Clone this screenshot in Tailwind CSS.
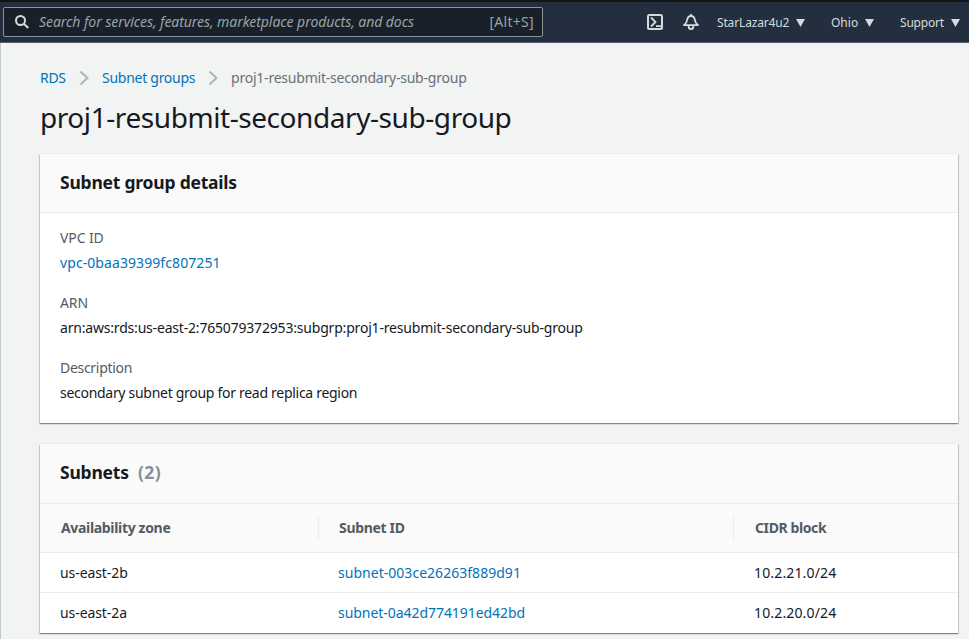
<!DOCTYPE html>
<html lang="en">
<head>
<meta charset="utf-8">
<title>RDS - Subnet groups</title>
<script src="https://cdn.jsdelivr.net/npm/@tailwindcss/browser@4"></script>
</head>
<body class="h-[639px] w-[969px] overflow-hidden bg-[#f2f3f3] font-['Noto_Sans',sans-serif] text-[14px] leading-5 text-[#16191f]">
<header class="flex h-[43px] items-center border-t-2 border-b border-t-[#141414] border-b-[#545b6e] bg-[#232f3e] pl-[3px] text-[#d5dbdb]">
  <div class="flex h-[30px] w-[540px] shrink-0 items-center rounded-[2px] border border-[#879596] bg-[#1a202a] px-[9px]">
    <svg class="ml-[2px] size-[14px] shrink-0" viewBox="0 0 14 14" fill="none" stroke="#d5dbdb" stroke-width="2"><circle cx="5.500" cy="5.500" r="4.500"/><path d="M8.800 8.800l4.500 4.200"/></svg>
    <span class="ml-[10px] whitespace-nowrap tracking-[-0.06px] text-[#95a5a6] italic">Search for services, features, marketplace products, and docs</span>
    <span class="-mr-px ml-auto whitespace-nowrap tracking-[0.3px] text-[#95a5a6]">[Alt+S]</span>
  </div>
  <svg class="ml-[104px] size-4 shrink-0" viewBox="0 0 16 16" fill="none" stroke="#d5dbdb" stroke-width="2"><rect x="1" y="1" width="14" height="14" rx="1.5"/><path d="M4 3.500l4.500 4.500L4 12.500M9 12.200h5" stroke-width="1.8"/></svg>
  <svg class="ml-5 size-4 shrink-0" viewBox="0 0 16 16" fill="none" stroke="#d5dbdb" stroke-width="1.8" stroke-linejoin="round"><path d="M8 0v2M1 11.100h14c-2-1.400-2.700-2.500-3.100-5C11.500 3.500 10.200 2 8 2S4.500 3.500 4.100 6.100C3.700 8.600 3 9.700 1 11.100zM5.700 11.500v1.200a2.300 2.300 0 0 0 4.600 0v-1.200"/></svg>
  <div class="ml-[18px] flex w-[114px] shrink-0 items-center pt-[2px] text-[12px]"><span class="w-[72px] whitespace-nowrap tracking-[-0.15px]">StarLazar4u2</span><svg class="ml-[7px] h-2 w-[9px]" viewBox="0 0 9 8" fill="#d5dbdb"><path d="M0 0h9L4.500 8z"/></svg></div>
  <div class="flex w-[69px] shrink-0 items-center pt-[2px] text-[12px]"><span class="w-[27px] whitespace-nowrap">Ohio</span><svg class="ml-[7px] h-2 w-[9px]" viewBox="0 0 9 8" fill="#d5dbdb"><path d="M0 0h9L4.500 8z"/></svg></div>
  <div class="flex shrink-0 items-center pt-[2px] text-[12px]"><span class="w-[45px] whitespace-nowrap tracking-[-0.2px]">Support</span><svg class="ml-[6px] h-2 w-[9px]" viewBox="0 0 9 8" fill="#d5dbdb"><path d="M0 0h9L4.500 8z"/></svg></div>
</header>
<main class="h-[596px] border-l border-[#c4c9c9] pt-[25px] pr-[11px] pl-[39px]">
  <nav class="flex h-5 items-center whitespace-nowrap">
    <a class="w-[27px] tracking-[-0.3px] text-[#0073bb]">RDS</a>
    <svg class="mr-[13px] ml-3 h-4 w-[10px]" viewBox="0 0 10 16" fill="none" stroke="#aab7b8" stroke-width="2"><path d="M1.500 1.500L8.500 8l-7 6.500"/></svg>
    <a class="w-[94px] tracking-[-0.27px] text-[#0073bb]">Subnet groups</a>
    <svg class="mr-[13px] ml-3 h-4 w-[10px]" viewBox="0 0 10 16" fill="none" stroke="#aab7b8" stroke-width="2"><path d="M1.500 1.500L8.500 8l-7 6.500"/></svg>
    <span class="tracking-[-0.22px] text-[#687078]">proj1-resubmit-secondary-sub-group</span>
  </nav>
  <h1 class="mt-[11px] h-9 text-[28px] leading-9 tracking-[-0.43px]">proj1-resubmit-secondary-sub-group</h1>
  <section class="mt-[19px] h-[269px] bg-white shadow-[0_1px_1px_0_rgba(0,28,36,0.3),1px_1px_1px_0_rgba(0,28,36,0.15),-1px_1px_1px_0_rgba(0,28,36,0.15),0_-1px_0_0_#eaeded]">
    <h2 class="flex h-[59px] items-center border-b border-[#eaeded] bg-[#fafafa] px-5 pb-[3px] text-[17.5px] font-bold tracking-[-0.22px]">Subnet group details</h2>
    <dl class="px-5 pt-[15px]">
      <dt class="tracking-[-0.1px] text-[#545b64]">VPC ID</dt>
      <dd class="mt-[5px] tracking-[0.08px] text-[#0073bb]">vpc-0baa39399fc807251</dd>
      <dt class="mt-5 tracking-[-0.1px] text-[#545b64]">ARN</dt>
      <dd class="mt-[5px] tracking-[-0.19px]">arn:aws:rds:us-east-2:765079372953:subgrp:proj1-resubmit-secondary-sub-group</dd>
      <dt class="mt-5 tracking-[-0.3px] text-[#545b64]">Description</dt>
      <dd class="mt-[5px] tracking-[-0.29px]">secondary subnet group for read replica region</dd>
    </dl>
  </section>
  <section class="mt-[21px] h-[189px] bg-white shadow-[0_1px_1px_0_rgba(0,28,36,0.3),1px_1px_1px_0_rgba(0,28,36,0.15),-1px_1px_1px_0_rgba(0,28,36,0.15),0_-1px_0_0_#eaeded]">
    <h2 class="flex h-[60px] items-center border-b border-[#eaeded] bg-[#fafafa] px-5 pb-[3px] text-[17.5px] font-bold tracking-[-0.22px]"><span class="w-[69px]">Subnets</span><span class="ml-[9px] tracking-[0.4px] text-[#879196]">(2)</span></h2>
    <div class="grid h-[49px] grid-cols-[279px_415px_1fr] items-center border-b border-[#eaeded] bg-[#fafafa] font-bold tracking-[-0.33px] text-[#545b64]">
      <div class="flex h-6 items-center border-r border-[#eaeded] pl-[21px]">Availability zone</div>
      <div class="flex h-6 items-center border-r border-[#eaeded] pl-5">Subnet ID</div>
      <div class="pl-[21px] tracking-[-0.4px]">CIDR block</div>
    </div>
    <div class="grid h-10 grid-cols-[298px_416px_1fr] items-center border-b border-[#eaeded]">
      <div class="pl-5 tracking-[-0.08px]">us-east-2b</div><div class="tracking-[0.03px] text-[#0073bb]">subnet-003ce26263f889d91</div><div class="tracking-[0.15px]">10.2.21.0/24</div>
    </div>
    <div class="grid h-10 grid-cols-[298px_416px_1fr] items-center">
      <div class="pl-5 tracking-[-0.08px]">us-east-2a</div><div class="tracking-[-0.05px] text-[#0073bb]">subnet-0a42d774191ed42bd</div><div class="tracking-[0.15px]">10.2.20.0/24</div>
    </div>
  </section>
</main>
</body>
</html>
